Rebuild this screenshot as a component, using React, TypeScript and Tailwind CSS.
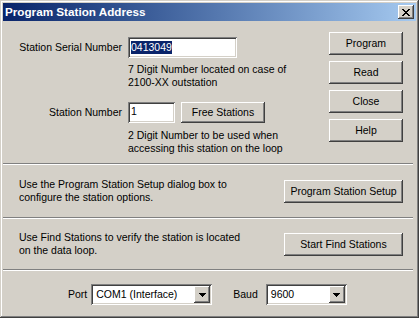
import React from 'react';

const raised =
  'shadow-[inset_-1px_-1px_#404040,inset_1px_1px_#ffffff,inset_-2px_-2px_#808080,inset_2px_2px_#d4d0c8]';
const sunken =
  'shadow-[inset_1px_1px_#808080,inset_-1px_-1px_#ffffff,inset_2px_2px_#404040,inset_-2px_-2px_#d4d0c8]';

const Btn: React.FC<{ children: React.ReactNode; className?: string }> = ({ children, className }) => (
  <button className={`flex items-center justify-center bg-[#d4d0c8] text-black leading-[13px] ${raised} ${className ?? ''}`}>
    {children}
  </button>
);

const Combo: React.FC<{ value: string; className: string }> = ({ value, className }) => (
  <div className={`flex items-center h-[21px] bg-white p-[2px] ${sunken} ${className}`}>
    <span className="flex-1 pl-[3px] leading-[13px]">{value}</span>
    <div className={`w-[16px] h-[17px] flex items-center justify-center bg-[#d4d0c8] ${raised}`}>
      <svg width="7" height="4" viewBox="0 0 7 4" shapeRendering="crispEdges">
        <rect x="0" y="0" width="7" height="1" fill="#000" />
        <rect x="1" y="1" width="5" height="1" fill="#000" />
        <rect x="2" y="2" width="3" height="1" fill="#000" />
        <rect x="3" y="3" width="1" height="1" fill="#000" />
      </svg>
    </div>
  </div>
);

// marlett-style close cross, 8x7 pixels
const crossRows = ['XX....XX', '.XX..XX.', '..XXXX..', '...XX...', '..XXXX..', '.XX..XX.', 'XX....XX'];

const Separator = () => <div className="mr-[3px] h-[2px] border-y border-t-[#808080] border-b-white" />;

const App: React.FC = () => {
  return (
    <div
      className={`w-[419px] h-[318px] p-[3px] flex flex-col bg-[#d4d0c8] text-black text-[10.5px] font-['Liberation_Sans',Arial,sans-serif] shadow-[inset_-1px_-1px_#404040,inset_1px_1px_#d4d0c8,inset_-2px_-2px_#808080,inset_2px_2px_#ffffff]`}
    >
      {/* Title bar */}
      <div className="flex items-center h-[18px] pl-[2px] pr-[2px] bg-gradient-to-r from-[#0a246a] to-[#a6caf0]">
        <span className="flex-1 text-white font-bold text-[11.7px] leading-[18px]">Program Station Address</span>
        <div className={`w-[16px] h-[14px] flex items-center justify-center bg-[#d4d0c8] ${raised}`}>
          <svg width="8" height="7" viewBox="0 0 8 7" shapeRendering="crispEdges">
            {crossRows.map((row, y) =>
              row.split('').map((c, x) =>
                c === 'X' ? <rect key={`${x}-${y}`} x={x} y={y} width="1" height="1" fill="#000" /> : null
              )
            )}
          </svg>
        </div>
      </div>

      {/* Address fields */}
      <div className="flex h-[142px]">
        <div className="flex-1 pt-[16px]">
          <div className="flex items-center">
            <div className="w-[119px] text-right">Station Serial Number</div>
            <div className={`ml-[6px] w-[109px] h-[21px] bg-white pl-[3px] pt-[3px] ${sunken}`}>
              <span className="inline-block bg-[#0a246a] text-white leading-[13px]">0413049</span>
            </div>
          </div>
          <div className="ml-[125px] mt-[5px] leading-[13px]">
            7 Digit Number located on case of
            <br />
            2100-XX outstation
          </div>
          <div className="flex items-center mt-[13px]">
            <div className="w-[119px] text-right">Station Number</div>
            <div className={`ml-[6px] w-[47px] h-[21px] bg-white pl-[3px] pt-[3px] leading-[13px] ${sunken}`}>1</div>
            <Btn className="ml-[6px] w-[84px] h-[21px]">Free Stations</Btn>
          </div>
          <div className="ml-[125px] mt-[6px] leading-[13px]">
            2 Digit Number to be used when
            <br />
            accessing this station on the loop
          </div>
        </div>
        <div className="flex flex-col gap-[6px] pt-[11px] pr-[13px]">
          <Btn className="w-[74px] h-[23px]">Program</Btn>
          <Btn className="w-[74px] h-[23px]">Read</Btn>
          <Btn className="w-[74px] h-[23px]">Close</Btn>
          <Btn className="w-[74px] h-[23px]">Help</Btn>
        </div>
      </div>

      <Separator />

      <div className="flex items-center h-[52px] pl-[16px] pr-[13px]">
        <div className="flex-1 leading-[13px]">
          Use the Program Station Setup dialog box to
          <br />
          configure the station options.
        </div>
        <Btn className="w-[119px] h-[23px]">Program Station Setup</Btn>
      </div>

      <Separator />

      <div className="flex items-center h-[50px] pl-[16px] pr-[13px]">
        <div className="flex-1 leading-[13px]">
          Use Find Stations to verify the station is located
          <br />
          on the data loop.
        </div>
        <Btn className="w-[119px] h-[23px]">Start Find Stations</Btn>
      </div>

      <Separator />

      <div className="flex items-center pt-[13px] pl-[65px]">
        <span className="mr-[4px]">Port</span>
        <Combo value="COM1 (Interface)" className="w-[121px]" />
        <span className="ml-[21px] mr-[8px]">Baud</span>
        <Combo value="9600" className="w-[81px]" />
      </div>
    </div>
  );
};

export default App;
